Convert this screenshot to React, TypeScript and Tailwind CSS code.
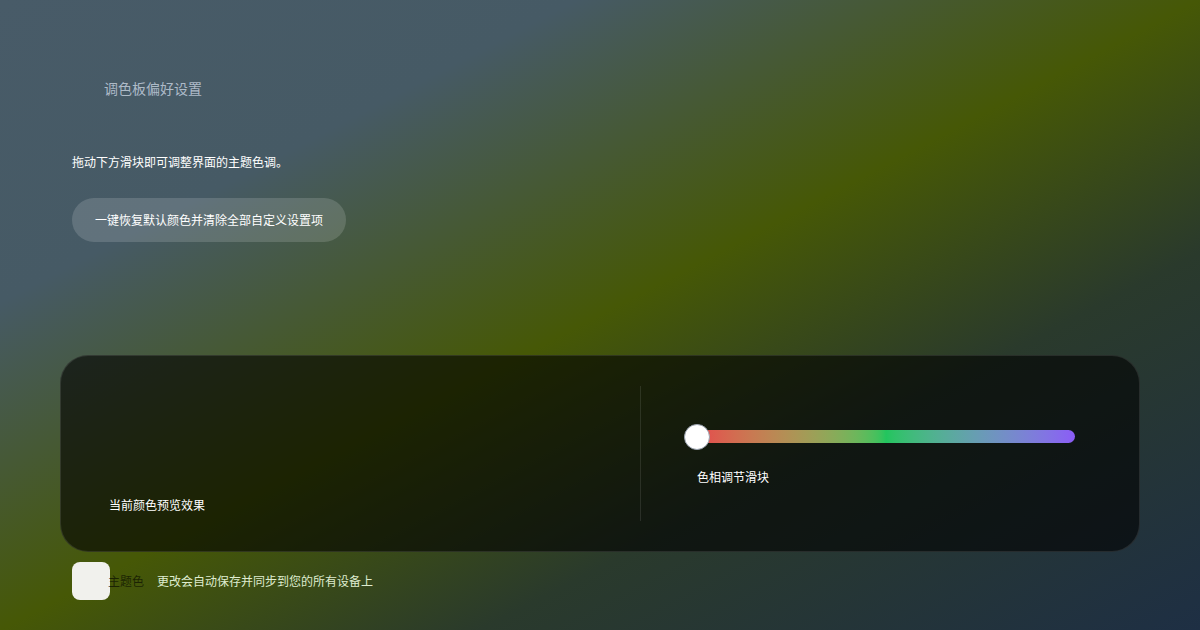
import { useState } from "react";

export default function App() {
  const [hue] = useState(0);

  return (
    <div className="min-h-screen w-full bg-[linear-gradient(to_bottom_right,#485b68_0%,#465a65_24%,#465806_50%,#2a3a2c_70%,#1e2f44_100%)] font-['Noto_Sans_CJK_SC','Noto_Sans',sans-serif] text-white">
      <div className="px-[72px] pt-[78px]">
        <h1 className="ml-8 text-[14px] leading-5 text-slate-300/80">调色板偏好设置</h1>

        <p className="mt-[54px] text-[12px] leading-5">拖动下方滑块即可调整界面的主题色调。</p>

        <button className="mt-[26px] h-[44px] w-[274px] rounded-full bg-white/15 text-[12px]">
          一键恢复默认颜色并清除全部自定义设置项
        </button>
      </div>

      <div className="mx-[60px] mt-[113px] flex h-[197px] rounded-[28px] border border-white/10 bg-black/60 py-[30px]">
        <div className="flex w-[579px] flex-col justify-end pb-[6px] pl-12">
          <span className="text-[12px] leading-5">当前颜色预览效果</span>
        </div>
        <div className="w-px bg-white/10" />
        <div className="flex-1 pl-14 pr-16 pt-[44px]">
          <div className="relative h-[13px] rounded-full bg-linear-to-r from-[#e5484d] via-[#22c55e] to-[#8b5cf6]">
            <div
              className="absolute top-1/2 h-[26px] w-[26px] -translate-x-1/2 -translate-y-1/2 rounded-full border border-gray-400 bg-white"
              style={{ left: `${(hue / 360) * 100}%` }}
            />
          </div>
          <span className="mt-[24px] block text-[12px] leading-5">色相调节滑块</span>
        </div>
      </div>

      <div className="mt-[10px] flex items-center px-[72px]">
        <div className="h-[38px] w-[38px] rounded-lg bg-[#f1f1ed]" />
        <span className="-ml-[2px] text-[12px] text-black/60">主题色</span>
        <span className="ml-[13px] text-[12px] text-[#dfeccf]">更改会自动保存并同步到您的所有设备上</span>
      </div>
    </div>
  );
}
